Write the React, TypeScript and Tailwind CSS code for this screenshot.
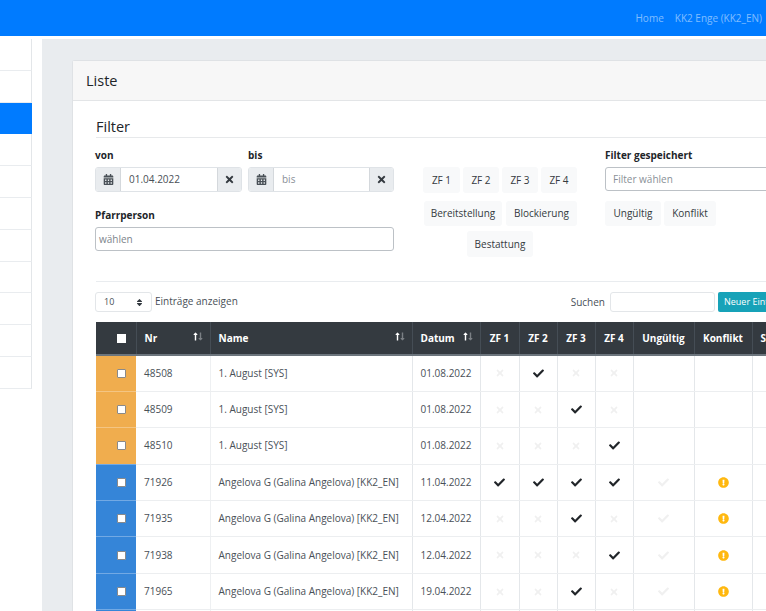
import React from 'react';
import { FaCalendarAlt, FaCheck, FaExclamationCircle, FaLongArrowAltDown, FaLongArrowAltUp, FaSort, FaTimes } from 'react-icons/fa';

type Row = {
    nr: string;
    name: string;
    datum: string;
    zf: number;
    blue: boolean;
};

const sysName = '1. August [SYS]';
const angName = 'Angelova G (Galina Angelova) [KK2_EN]';

// zf is a bitmask, ZF 1 = 1 ... ZF 4 = 8
const rows: Row[] = [
    { nr: '48508', name: sysName, datum: '01.08.2022', zf: 2, blue: false },
    { nr: '48509', name: sysName, datum: '01.08.2022', zf: 4, blue: false },
    { nr: '48510', name: sysName, datum: '01.08.2022', zf: 8, blue: false },
    { nr: '71926', name: angName, datum: '11.04.2022', zf: 15, blue: true },
    { nr: '71935', name: angName, datum: '12.04.2022', zf: 4, blue: true },
    { nr: '71938', name: angName, datum: '12.04.2022', zf: 8, blue: true },
    { nr: '71965', name: angName, datum: '19.04.2022', zf: 4, blue: true },
    { nr: '71970', name: angName, datum: '19.04.2022', zf: 8, blue: true },
];

const sidebarRows = [0, 1, 2, 3, 4, 5, 6, 7, 8, 9, 10];

const Pill = ({ label, className }: { label: string; className: string }) => (
    <span className={`flex items-center justify-center rounded-[3px] bg-[#f8f9fa] text-[10px] text-[#343a40] ${className}`}>{label}</span>
);

const SortArrows = () => (
    <span className="absolute top-[10px] right-[5px] flex">
        <FaLongArrowAltUp className="-mr-[4px] size-[9px] text-white" />
        <FaLongArrowAltDown className="size-[9px] text-[#7b8085]" />
    </span>
);

const Box = () => <span className="block size-[9px] rounded-[1px] border border-[#8a8a8a] bg-white" />;

const DateField = ({ label, value, muted, width }: { label: string; value: string; muted?: boolean; width: string }) => (
    <div className={width}>
        <div className="h-[24px] pt-[5px] text-[10px] leading-[15px] font-bold text-[#212529]">{label}</div>
        <div className="flex h-[25px] overflow-hidden rounded-[3px] border border-[#dfe3e7]">
            <span className="flex w-[25px] items-center justify-center border-r border-[#d4d8dc] bg-[#e9ecef] text-[#495057]">
                <FaCalendarAlt className="size-[11px]" />
            </span>
            <span className={`flex flex-1 items-center pl-[8px] text-[10px] ${muted ? 'text-[#8a9097]' : 'text-[#495057]'}`}>{value}</span>
            <span className="flex w-[24px] items-center justify-center border-l border-[#d4d8dc] bg-[#e9ecef] text-[#343a40]">
                <FaTimes className="size-[11px]" />
            </span>
        </div>
    </div>
);

const Th = ({ children, sort, center }: { children: React.ReactNode; sort?: boolean; center?: boolean }) => (
    <th className={`relative h-[33px] border-r border-[#454d55] border-b-2 border-b-[#6c757d] px-[8px] align-middle text-[10px] font-bold whitespace-nowrap text-white ${center ? 'text-center' : 'text-left'}`}>
        {children}
        {sort && <SortArrows />}
    </th>
);

const ZfCell = ({ on }: { on: boolean }) => (
    <td className="border-r border-b border-r-[#e4e7ea] border-b-[#eceef0] text-center">
        <span className="flex justify-center">
            {on ? <FaCheck className="size-[11px] text-[#212529]" /> : <FaTimes className="size-[10px] text-[#f0f0f0]" />}
        </span>
    </td>
);

export default function App() {
    return (
        <div className="h-[611px] w-[766px] overflow-hidden bg-white font-['Open_Sans',sans-serif] text-[#212529]">
            <nav className="flex h-[36px] items-center justify-end gap-[11px] bg-[#007bff] pr-[4px] text-[10px] text-white/50">
                <span>Home</span>
                <span>KK2 Enge (KK2_EN)</span>
            </nav>

            <div className="mt-[3px] flex h-[572px]">
                <aside className="h-[350px] w-[32px] shrink-0 border-b border-[#e3e6e9]">
                    {sidebarRows.map((i) => (
                        <div key={i} className={`h-[31.8px] ${i === 2 ? 'bg-[#007bff]' : 'border-r border-b border-r-[#e3e6e9] border-b-[#e9ecef] bg-white'}`} />
                    ))}
                </aside>

                <main className="ml-[10px] flex-1 overflow-hidden bg-[#e9ecef] pt-[21px] pl-[30px]">
                    <section className="h-[560px] w-[800px] rounded-tl-[3px] border-t border-l border-[#dfe2e5] bg-white">
                        <header className="flex h-[40px] items-center border-b border-[#e3e5e7] bg-[#f7f7f7] pl-[13px] text-[14.5px] text-[#212529]">Liste</header>

                        <div className="pl-[23px]">
                            <h2 className="h-[37px] border-b border-[#e7e9eb] pt-[15px] text-[14.5px] leading-[21px] text-[#212529]">Filter</h2>

                            <div className="flex border-b border-[#e9ecef] pt-[5px] pb-[24px]">
                                <div className="-ml-[1px] w-[299px] shrink-0">
                                    <div className="flex justify-between">
                                        <DateField label="von" value="01.04.2022" width="w-[147px]" />
                                        <DateField label="bis" value="bis" muted width="w-[146px]" />
                                    </div>
                                    <div className="mt-[13px] h-[22px] text-[10px] leading-[20px] font-bold text-[#212529]">Pfarrperson</div>
                                    <div className="flex h-[24px] items-center rounded-[3px] border border-[#bcc1c6] pl-[3px] text-[10px] text-[#7d848b]">wählen</div>
                                </div>

                                <div className="ml-[29px] w-[154px] shrink-0 pt-[24px]">
                                    <div className="flex gap-[3px]">
                                        <Pill label="ZF 1" className="h-[26px] w-[37px]" />
                                        <Pill label="ZF 2" className="h-[26px] w-[36px]" />
                                        <Pill label="ZF 3" className="h-[26px] w-[36px]" />
                                        <Pill label="ZF 4" className="h-[26px] w-[36px]" />
                                    </div>
                                    <div className="mt-[8px] flex gap-[4px] pl-[1px]">
                                        <Pill label="Bereitstellung" className="h-[25px] w-[78px]" />
                                        <Pill label="Blockierung" className="h-[25px] w-[71px]" />
                                    </div>
                                    <div className="mt-[5px] flex justify-center">
                                        <Pill label="Bestattung" className="h-[26px] w-[66px]" />
                                    </div>
                                </div>

                                <div className="ml-[28px] w-[290px] shrink-0">
                                    <div className="h-[24px] pt-[5px] text-[10px] leading-[15px] font-bold text-[#212529]">Filter gespeichert</div>
                                    <div className="flex h-[24px] items-center rounded-[3px] border border-[#bcc1c6] pl-[7px] text-[10px] text-[#8a9097]">Filter wählen</div>
                                    <div className="mt-[10px] flex gap-[3px]">
                                        <Pill label="Ungültig" className="h-[25px] w-[56px]" />
                                        <Pill label="Konflikt" className="h-[25px] w-[52px]" />
                                    </div>
                                </div>
                            </div>

                            <div className="mt-[10px] flex h-[20px] w-[692px] items-center justify-between">
                                <div className="-ml-[1px] flex items-center">
                                    <div className="flex h-[20px] w-[57px] items-center justify-between rounded-[3px] border border-[#e3e6e9] pr-[7px] pl-[8px] text-[9px] text-[#495057]">
                                        10
                                        <FaSort className="size-[9px] text-[#343a40]" />
                                    </div>
                                    <span className="mb-[2px] ml-[3px] text-[10px] text-[#495057]">Einträge anzeigen</span>
                                </div>
                                <div className="flex items-center">
                                    <span className="text-[10px] text-[#495057]">Suchen</span>
                                    <div className="ml-[5px] h-[20px] w-[105px] rounded-[3px] border border-[#e3e6e9]" />
                                    <span className="ml-[3px] flex h-[20px] w-[70px] items-center rounded-[2px] bg-[#17a2b8] pl-[6px] text-[9px] whitespace-nowrap text-white">Neuer Eintrag</span>
                                </div>
                            </div>

                            <table className="mt-[10px] w-[717px] table-fixed border-collapse text-[10px] text-[#495057]">
                                <colgroup>
                                    <col className="w-[40px]" />
                                    <col className="w-[74px]" />
                                    <col className="w-[202px]" />
                                    <col className="w-[68px]" />
                                    <col className="w-[39px]" />
                                    <col className="w-[38px]" />
                                    <col className="w-[38px]" />
                                    <col className="w-[38px]" />
                                    <col className="w-[61px]" />
                                    <col className="w-[58px]" />
                                    <col className="w-[61px]" />
                                </colgroup>
                                <thead className="bg-[#343a40]">
                                    <tr>
                                        <Th>
                                            <span className="flex justify-center pl-[11px]">
                                                <span className="block size-[9px] bg-white" />
                                            </span>
                                        </Th>
                                        <Th sort>Nr</Th>
                                        <Th sort>Name</Th>
                                        <Th sort>Datum</Th>
                                        <Th center>ZF 1</Th>
                                        <Th center>ZF 2</Th>
                                        <Th center>ZF 3</Th>
                                        <Th center>ZF 4</Th>
                                        <Th center>Ungültig</Th>
                                        <Th center>Konflikt</Th>
                                        <Th>Status</Th>
                                    </tr>
                                </thead>
                                <tbody>
                                    {rows.map((row) => (
                                        <tr key={row.nr} className="h-[36.4px]">
                                            <td className={`border-b border-b-white/30 ${row.blue ? 'bg-[#3585d8]' : 'bg-[#f0ad4e]'}`}>
                                                <span className="flex justify-center pl-[11px]">
                                                    <Box />
                                                </span>
                                            </td>
                                            <td className="border-r border-b border-r-[#eef0f2] border-b-[#eceef0] pl-[8px]">{row.nr}</td>
                                            <td className="border-r border-b border-r-[#e4e7ea] border-b-[#eceef0] pl-[8px] whitespace-nowrap">{row.name}</td>
                                            <td className="border-r border-b border-r-[#e4e7ea] border-b-[#eceef0] pl-[8px]">{row.datum}</td>
                                            <ZfCell on={(row.zf & 1) !== 0} />
                                            <ZfCell on={(row.zf & 2) !== 0} />
                                            <ZfCell on={(row.zf & 4) !== 0} />
                                            <ZfCell on={(row.zf & 8) !== 0} />
                                            <td className="border-r border-b border-r-[#e4e7ea] border-b-[#eceef0]">
                                                {row.blue && (
                                                    <span className="flex justify-center">
                                                        <FaCheck className="size-[11px] text-[#f0f0f0]" />
                                                    </span>
                                                )}
                                            </td>
                                            <td className="border-r border-b border-r-[#e4e7ea] border-b-[#eceef0]">
                                                {row.blue && (
                                                    <span className="flex justify-center">
                                                        <FaExclamationCircle className="size-[11px] text-[#ffb80f]" />
                                                    </span>
                                                )}
                                            </td>
                                            <td className="border-b border-b-[#eceef0]" />
                                        </tr>
                                    ))}
                                </tbody>
                            </table>
                        </div>
                    </section>
                </main>
            </div>
        </div>
    );
}
